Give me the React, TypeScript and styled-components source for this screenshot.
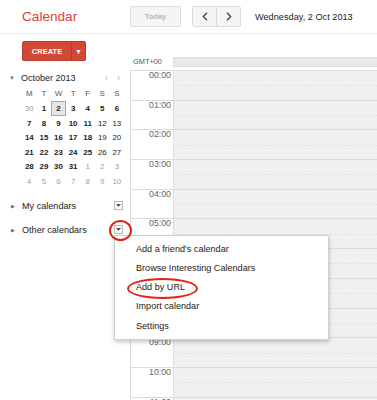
import React from 'react'
import styled, { createGlobalStyle } from 'styled-components'

const GlobalStyle = createGlobalStyle`
  html, body {
    margin: 0;
    padding: 0;
    background: #fff;
    overflow: hidden;
  }
  body {
    font-family: "Liberation Sans", Arial, sans-serif;
  }
`

const Page = styled.div`
  position: relative;
  width: 377px;
  height: 400px;
  overflow: hidden;
  background: #fff;
`

const Header = styled.div`
  display: flex;
  align-items: center;
  height: 33px;
  padding-left: 22px;
  border-bottom: 1px solid #ebebeb;
`

const Title = styled.div`
  width: 108px;
  font-size: 13.6px;
  color: #d9422f;
`

const TodayButton = styled.div`
  box-sizing: border-box;
  width: 51px;
  height: 21px;
  display: flex;
  align-items: center;
  justify-content: center;
  background: #f5f5f5;
  border: 1px solid #dedede;
  border-radius: 2px;
  font-size: 7.5px;
  font-weight: bold;
  color: #b8b8b8;
`

const NavGroup = styled.div`
  display: flex;
  margin-left: 11px;
  height: 21px;
  border: 1px solid #dcdcdc;
  border-radius: 2px;
  box-sizing: border-box;
  background: #f5f5f5;
`

const NavButton = styled.div<{ $divider?: boolean }>`
  width: 23px;
  display: flex;
  align-items: center;
  justify-content: center;
  border-left: ${p => (p.$divider ? '1px solid #dcdcdc' : 'none')};
`

const DateText = styled.div`
  margin-left: 14px;
  font-size: 9.2px;
  color: #222;
`

const Body = styled.div`
  display: flex;
`

const Sidebar = styled.div`
  width: 130px;
  flex-shrink: 0;
  padding-top: 7px;
`

const CreateButton = styled.div`
  box-sizing: border-box;
  margin-left: 22px;
  width: 64px;
  height: 20px;
  display: flex;
  background: #d14836;
  border: 1px solid #b93a28;
  border-radius: 2px;
  color: #fff;
`

const CreateLabel = styled.div`
  flex: 1;
  display: flex;
  align-items: center;
  justify-content: center;
  font-size: 7.4px;
  font-weight: bold;
  letter-spacing: 0.1px;
`

const CreateArrow = styled.div`
  width: 13px;
  display: flex;
  align-items: center;
  justify-content: center;
  border-left: 1px solid #b93a28;
  font-size: 7px;
`

const MonthHeader = styled.div`
  display: flex;
  align-items: center;
  height: 16.6px;
  margin-top: 9px;
  padding-left: 9px;
  font-size: 9px;
  color: #222;
`

const Caret = styled.span`
  width: 12px;
  font-size: 6px;
  color: #777;
`

const MonthName = styled.span`
  flex: 1;
`

const MonthArrows = styled.span`
  width: 15px;
  display: flex;
  justify-content: space-between;
  margin-right: 10px;
  font-size: 9px;
  color: #aaa;
`

const DayGrid = styled.div`
  display: grid;
  grid-template-columns: repeat(7, 14.6px);
  grid-auto-rows: 14.6px;
  margin-left: 22px;
`

const DayName = styled.div`
  display: flex;
  align-items: center;
  justify-content: center;
  font-size: 8px;
  color: #555;
`

const DayCell = styled.div<{ $kind: 'bold' | 'plain' | 'other'; $today?: boolean }>`
  box-sizing: border-box;
  display: flex;
  align-items: center;
  justify-content: center;
  font-size: 7.9px;
  font-weight: ${p => (p.$kind === 'bold' ? 'bold' : 'normal')};
  color: ${p => (p.$kind === 'other' ? '#a0a0a0' : '#222')};
  background: ${p => (p.$today ? '#e6e6e6' : 'transparent')};
  border: ${p => (p.$today ? '1px solid #a8a8a8' : '1px solid transparent')};
`

const CalList = styled.div`
  margin-top: 5px;
`

const CalRow = styled.div`
  display: flex;
  align-items: center;
  height: 24px;
  padding-left: 11px;
  font-size: 9.1px;
  color: #222;
`

const RowCaret = styled.span`
  width: 11px;
  font-size: 5px;
  color: #666;
`

const RowLabel = styled.span`
  flex: 1;
`

const MenuBox = styled.div`
  box-sizing: border-box;
  width: 9px;
  height: 9px;
  margin-right: 7px;
  border: 1px solid #bbb;
  background: #fafafa;
  display: flex;
  align-items: center;
  justify-content: center;
`

const Main = styled.div`
  flex: 1;
`

const AllDayRow = styled.div`
  display: flex;
  height: 10px;
  margin-top: 23px;
  margin-bottom: 3px;
`

const GmtLabel = styled.div`
  width: 43px;
  padding-left: 3px;
  box-sizing: border-box;
  font-size: 7.4px;
  line-height: 10px;
  color: #555;
`

const AllDayBar = styled.div`
  flex: 1;
  background: #e8e8e8;
  border: 1px solid #dddddd;
  border-right: none;
`

const HourGrid = styled.div`
  border-top: 1px solid #dcdcdc;
  border-left: 1px solid #dcdcdc;
`

const HourRow = styled.div`
  box-sizing: border-box;
  display: flex;
  height: 29.7px;
  border-bottom: 1px solid #dcdcdc;
`

const TimeCell = styled.div`
  width: 42px;
  padding-right: 2px;
  box-sizing: border-box;
  text-align: right;
  font-size: 8.8px;
  line-height: 9px;
  color: #666;
  background: #fff;
`

const Slot = styled.div`
  flex: 1;
  background: #f0f0f0;
  border-left: 1px solid #dcdcdc;
  &::before {
    content: '';
    display: block;
    height: 50%;
    border-bottom: 1px dashed #e2e2e2;
  }
`

const Menu = styled.div`
  position: absolute;
  left: 114px;
  top: 235px;
  width: 215px;
  box-sizing: border-box;
  padding: 3.5px 0;
  background: #fff;
  border: 1px solid #cfcfcf;
  box-shadow: 0 2px 4px rgba(0, 0, 0, 0.22);
`

const MenuItem = styled.div`
  height: 19.3px;
  line-height: 19.3px;
  padding-left: 21px;
  font-size: 9.1px;
  color: #222;
`

const Ring = styled.div<{ $l: number; $t: number; $w: number; $h: number }>`
  position: absolute;
  left: ${p => p.$l}px;
  top: ${p => p.$t}px;
  width: ${p => p.$w}px;
  height: ${p => p.$h}px;
  box-sizing: border-box;
  border: 2px solid #e2231a;
  border-radius: 50%;
`

const Chevron = ({ dir }: { dir: 'left' | 'right' }) => (
  <svg width="6" height="9" viewBox="0 0 6 9">
    <path
      d={dir === 'left' ? 'M5 0.8 L1.3 4.5 L5 8.2' : 'M1 0.8 L4.7 4.5 L1 8.2'}
      fill="none"
      stroke="#444"
      strokeWidth="1.3"
    />
  </svg>
)

const SmallDown = () => (
  <svg width="5" height="3" viewBox="0 0 5 3">
    <path d="M0 0 L5 0 L2.5 3 Z" fill="#555" />
  </svg>
)

type Kind = 'bold' | 'plain' | 'other'
const days: [string, Kind][] = [
  ['30', 'other'], ['1', 'bold'], ['2', 'bold'], ['3', 'bold'], ['4', 'bold'], ['5', 'bold'], ['6', 'bold'],
  ['7', 'bold'], ['8', 'bold'], ['9', 'bold'], ['10', 'bold'], ['11', 'bold'], ['12', 'plain'], ['13', 'plain'],
  ['14', 'bold'], ['15', 'bold'], ['16', 'bold'], ['17', 'bold'], ['18', 'bold'], ['19', 'plain'], ['20', 'plain'],
  ['21', 'bold'], ['22', 'bold'], ['23', 'bold'], ['24', 'bold'], ['25', 'bold'], ['26', 'plain'], ['27', 'plain'],
  ['28', 'bold'], ['29', 'bold'], ['30', 'bold'], ['31', 'bold'], ['1', 'other'], ['2', 'other'], ['3', 'other'],
  ['4', 'other'], ['5', 'other'], ['6', 'other'], ['7', 'other'], ['8', 'other'], ['9', 'other'], ['10', 'other'],
]

const hours = ['00:00', '01:00', '02:00', '03:00', '04:00', '05:00', '06:00', '07:00', '08:00', '09:00', '10:00', '11:00']

const menuItems = ["Add a friend's calendar", 'Browse Interesting Calendars', 'Add by URL', 'Import calendar', 'Settings']

export default function App() {
  return (
    <Page>
      <GlobalStyle />
      <Header>
        <Title>Calendar</Title>
        <TodayButton>Today</TodayButton>
        <NavGroup>
          <NavButton><Chevron dir="left" /></NavButton>
          <NavButton $divider><Chevron dir="right" /></NavButton>
        </NavGroup>
        <DateText>Wednesday, 2 Oct 2013</DateText>
      </Header>
      <Body>
        <Sidebar>
          <CreateButton>
            <CreateLabel>CREATE</CreateLabel>
            <CreateArrow>▼</CreateArrow>
          </CreateButton>
          <MonthHeader>
            <Caret>▼</Caret>
            <MonthName>October 2013</MonthName>
            <MonthArrows><span>‹</span><span>›</span></MonthArrows>
          </MonthHeader>
          <DayGrid>
            {['M', 'T', 'W', 'T', 'F', 'S', 'S'].map((d, i) => (
              <DayName key={i}>{d}</DayName>
            ))}
            {days.map(([n, k], i) => (
              <DayCell key={i} $kind={k} $today={i === 2}>{n}</DayCell>
            ))}
          </DayGrid>
          <CalList>
            <CalRow>
              <RowCaret>▶</RowCaret>
              <RowLabel>My calendars</RowLabel>
              <MenuBox><SmallDown /></MenuBox>
            </CalRow>
            <CalRow>
              <RowCaret>▶</RowCaret>
              <RowLabel>Other calendars</RowLabel>
              <MenuBox><SmallDown /></MenuBox>
            </CalRow>
          </CalList>
        </Sidebar>
        <Main>
          <AllDayRow>
            <GmtLabel>GMT+00</GmtLabel>
            <AllDayBar />
          </AllDayRow>
          <HourGrid>
            {hours.map(h => (
              <HourRow key={h}>
                <TimeCell>{h}</TimeCell>
                <Slot />
              </HourRow>
            ))}
          </HourGrid>
        </Main>
      </Body>
      <Menu>
        {menuItems.map(m => (
          <MenuItem key={m}>{m}</MenuItem>
        ))}
      </Menu>
      <Ring $l={109} $t={220} $w={23} $h={21} />
      <Ring $l={127} $t={278} $w={71} $h={21} />
    </Page>
  )
}
